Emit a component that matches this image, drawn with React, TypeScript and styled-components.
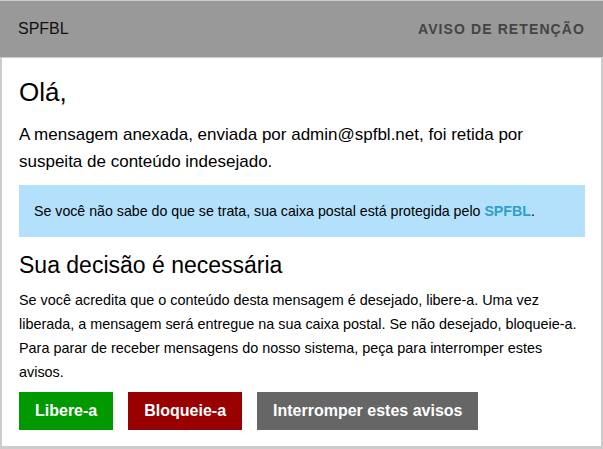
import React from 'react';
import styled, { createGlobalStyle } from 'styled-components';

const GlobalStyle = createGlobalStyle`
  html, body {
    margin: 0;
    padding: 0;
    background: #cccccc;
    font-family: "Liberation Sans", Arial, sans-serif;
  }
`;

const Page = styled.div`
  width: 603px;
  height: 449px;
  padding-top: 1px;
  box-sizing: border-box;
  background: #cccccc;
  overflow: hidden;
`;

const Header = styled.div`
  height: 56px;
  background: #999999;
  display: flex;
  align-items: center;
  justify-content: space-between;
  padding: 0 19px 0 18px;
  box-sizing: border-box;
`;

const Brand = styled.div`
  font-size: 16px;
  color: #111111;
`;

const Notice = styled.div`
  font-size: 14px;
  font-weight: bold;
  letter-spacing: 1.1px;
  margin-right: -1px;
  color: #444444;
`;

const Panel = styled.div`
  margin: 1px 2px 0 2px;
  height: 388px;
  background: #ffffff;
  padding: 17px 16px 0 17px;
  box-sizing: border-box;
`;

const Title = styled.h1`
  margin: 0;
  font-size: 26px;
  font-weight: normal;
  color: #000000;
  line-height: 34px;
`;

const Lead = styled.p`
  margin: 12px 0 10px;
  max-width: 530px;
  font-size: 17px;
  line-height: 27px;
  color: #000000;
`;

const InfoBox = styled.div`
  background: #b3e1fb;
  height: 52px;
  display: flex;
  align-items: center;
  padding: 0 15px;
  font-size: 14.2px;
  color: #000000;
`;

const Highlight = styled.span`
  color: #2f9fc9;
  font-weight: bold;
`;

const Subtitle = styled.h2`
  margin: 13px 0 0;
  font-size: 23px;
  font-weight: normal;
  line-height: 30px;
  color: #000000;
`;

const Body = styled.p`
  margin: 8px 0 8px;
  font-size: 14.4px;
  line-height: 24px;
  color: #000000;
`;

const Actions = styled.div`
  display: flex;
  gap: 15px;
`;

const ActionButton = styled.a<{ $bg: string }>`
  display: inline-flex;
  align-items: center;
  height: 38px;
  padding: 0 16px;
  background: ${(p) => p.$bg};
  color: #ffffff;
  font-size: 16px;
  font-weight: bold;
  text-decoration: none;
  cursor: pointer;
`;

const App = () => {
  return (
    <Page>
      <GlobalStyle />
      <Header>
        <Brand>SPFBL</Brand>
        <Notice>AVISO DE RETENÇÃO</Notice>
      </Header>
      <Panel>
        <Title>Olá,</Title>
        <Lead>
          A mensagem anexada, enviada por admin@spfbl.net, foi retida por
          suspeita de conteúdo indesejado.
        </Lead>
        <InfoBox>
          <span>
            Se você não sabe do que se trata, sua caixa postal está protegida
            pelo <Highlight>SPFBL</Highlight>.
          </span>
        </InfoBox>
        <Subtitle>Sua decisão é necessária</Subtitle>
        <Body>
          Se você acredita que o conteúdo desta mensagem é desejado, libere-a.
          Uma vez liberada, a mensagem será entregue na sua caixa postal. Se não
          desejado, bloqueie-a. Para parar de receber mensagens do nosso
          sistema, peça para interromper estes avisos.
        </Body>
        <Actions>
          <ActionButton $bg="#009900">Libere-a</ActionButton>
          <ActionButton $bg="#990000">Bloqueie-a</ActionButton>
          <ActionButton $bg="#666666">Interromper estes avisos</ActionButton>
        </Actions>
      </Panel>
    </Page>
  );
};

export default App;
